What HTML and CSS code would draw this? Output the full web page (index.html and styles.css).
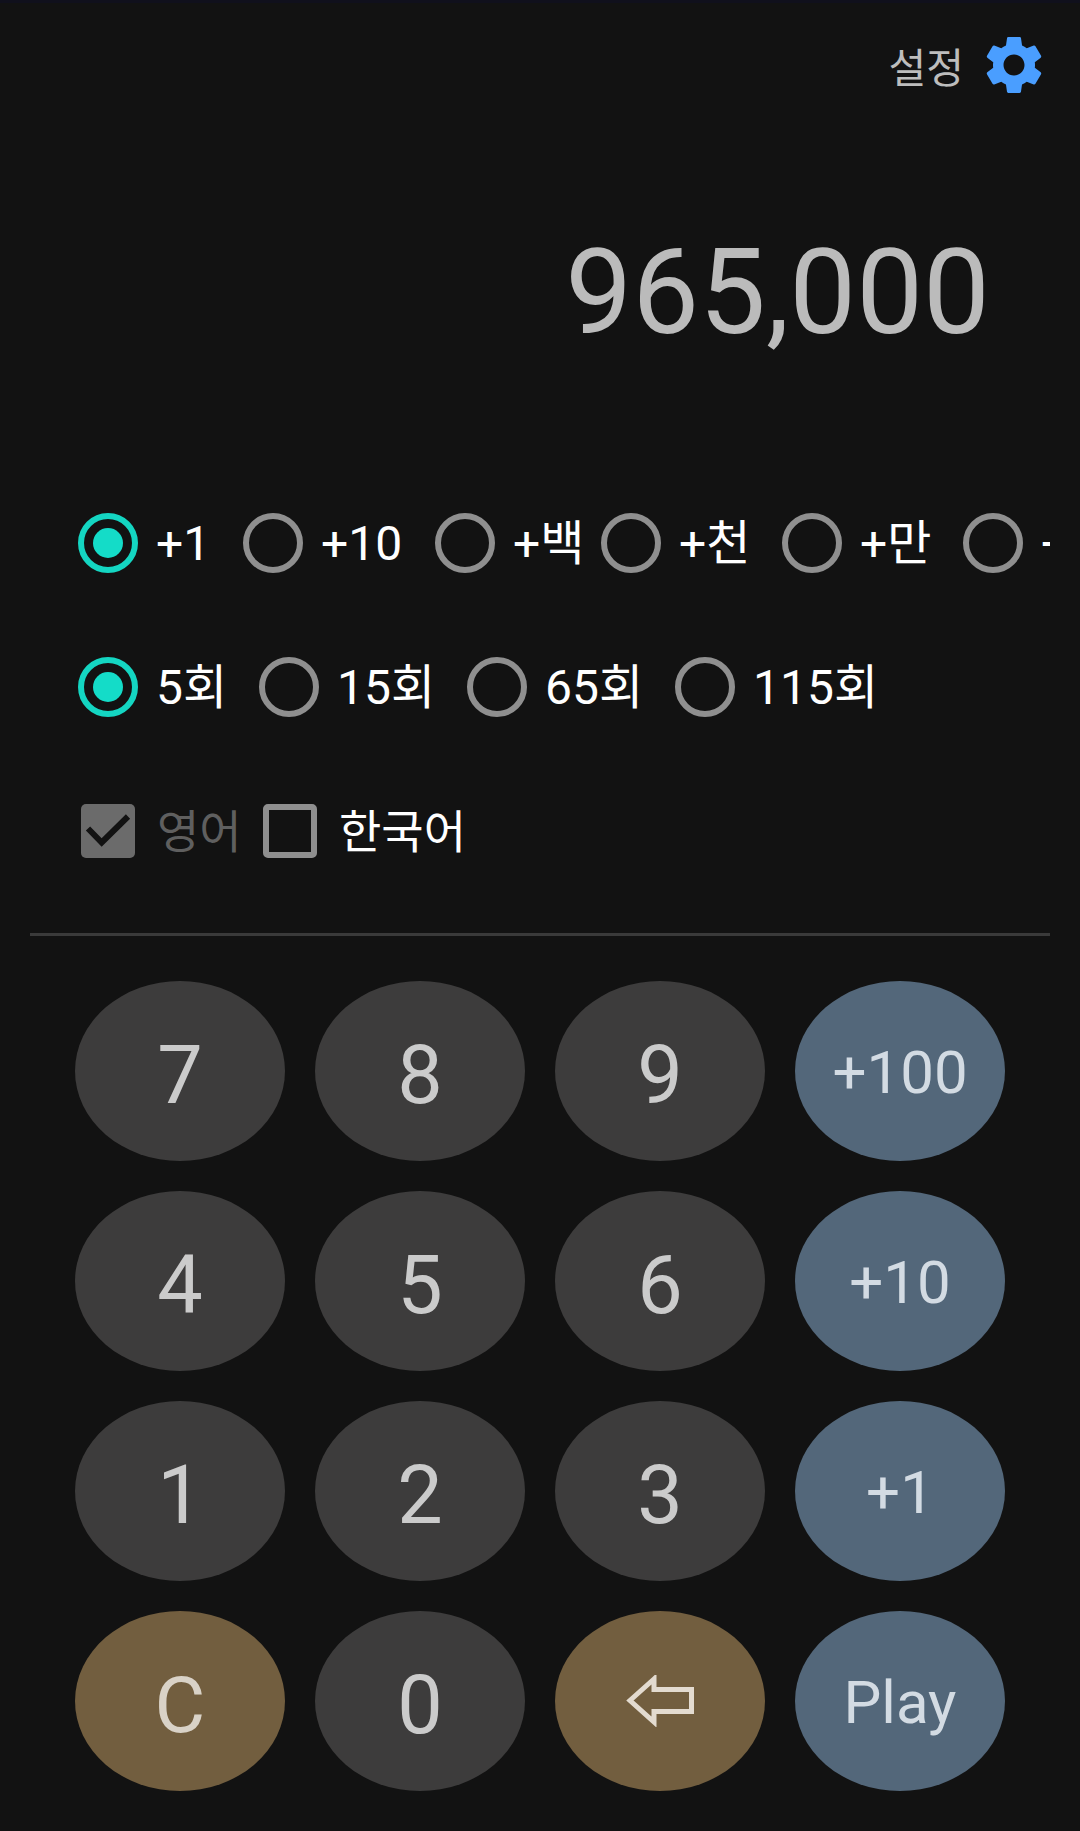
FILE: index.html
```html
<!DOCTYPE html>
<html lang="ko">
<head>
<meta charset="utf-8">
<title>설정</title>
<link rel="stylesheet" href="styles.css">
</head>
<body>
<div class="topstrip"></div>
<header class="header">
  <span class="settings-label">설정</span>
  <svg class="gear" viewBox="0 0 24 24"><path d="M19.14 12.94c.04-.3.06-.61.06-.94 0-.32-.02-.64-.07-.94l2.03-1.58c.18-.14.23-.41.12-.61l-1.92-3.32c-.12-.22-.37-.29-.59-.22l-2.39.96c-.5-.38-1.03-.7-1.62-.94l-.36-2.54c-.04-.24-.24-.41-.48-.41h-3.84c-.24 0-.43.17-.47.41l-.36 2.54c-.59.24-1.13.57-1.62.94l-2.39-.96c-.22-.08-.47 0-.59.22L2.74 8.87c-.12.21-.08.47.12.61l2.03 1.58c-.05.3-.09.63-.09.94s.02.64.07.94l-2.03 1.58c-.18.14-.23.41-.12.61l1.92 3.32c.12.22.37.29.59.22l2.39-.96c.5.38 1.03.7 1.62.94l.36 2.54c.05.24.24.41.48.41h3.84c.24 0 .44-.17.47-.41l.36-2.54c.59-.24 1.13-.56 1.62-.94l2.39.96c.22.08.47 0 .59-.22l1.92-3.32c.12-.22.07-.47-.12-.61l-2.01-1.58zM12 15.6c-1.98 0-3.6-1.62-3.6-3.6s1.62-3.6 3.6-3.6 3.6 1.62 3.6 3.6-1.62 3.6-3.6 3.6z"/></svg>
</header>
<div class="display">965,000</div>
<div class="options row-step">
  <div class="opt w-a"><span class="radio on"></span><span class="lbl">+1</span></div>
  <div class="opt w-b"><span class="radio"></span><span class="lbl">+10</span></div>
  <div class="opt w-c"><span class="radio"></span><span class="lbl">+백</span></div>
  <div class="opt w-d"><span class="radio"></span><span class="lbl">+천</span></div>
  <div class="opt w-d"><span class="radio"></span><span class="lbl">+만</span></div>
  <div class="opt"><span class="radio"></span><span class="lbl">+억</span></div>
</div>
<div class="options row-times">
  <div class="opt w-e"><span class="radio on"></span><span class="lbl">5회</span></div>
  <div class="opt w-f"><span class="radio"></span><span class="lbl">15회</span></div>
  <div class="opt w-f"><span class="radio"></span><span class="lbl">65회</span></div>
  <div class="opt"><span class="radio"></span><span class="lbl">115회</span></div>
</div>
<div class="options row-lang">
  <div class="opt w-g"><span class="check on"><svg viewBox="0 0 54 54"><path d="M7 24.5 L20.7 38.5 L47 12.5" /></svg></span><span class="lbl dim">영어</span></div>
  <div class="opt"><span class="check"></span><span class="lbl">한국어</span></div>
</div>
<hr class="divider">
<main class="keypad">
  <button class="key">7</button><button class="key">8</button><button class="key">9</button><button class="key blue small">+100</button>
  <button class="key">4</button><button class="key">5</button><button class="key">6</button><button class="key blue small">+10</button>
  <button class="key">1</button><button class="key">2</button><button class="key">3</button><button class="key blue small">+1</button>
  <button class="key brown">C</button><button class="key">0</button>
  <button class="key brown" aria-label="지우기"><svg class="back" viewBox="0 0 68 52"><path d="M28 4 L4 25.5 L28 47 V36.5 H65.5 V14.5 H28 Z"/></svg></button>
  <button class="key blue small">Play</button>
</main>
</body>
</html>
```
FILE: styles.css
```css
* { box-sizing: border-box; }
html, body { margin: 0; padding: 0; }
body {
  width: 1080px;
  height: 1831px;
  overflow: hidden;
  background: #121212;
  font-family: Roboto, "Noto Sans CJK KR", sans-serif;
  color: #fff;
}
.topstrip { height: 3px; background: #10101c; }
.header {
  height: 123px;
  padding: 0 31px 0 0;
  display: flex;
  justify-content: flex-end;
  align-items: center;
  gap: 15px;
}
.settings-label { font-size: 41px; color: #bdbdbd; }
.gear { width: 70px; height: 70px; fill: #4a9eff; display: block; }
.display {
  height: 166px;
  margin-top: 84px;
  padding-right: 90px;
  text-align: right;
  font-size: 119px;
  line-height: 166px;
  color: #bbbbbb;
}
.options {
  display: flex;
  align-items: center;
  height: 60px;
  width: 972px;
  margin-left: 78px;
  overflow: hidden;
}
.row-step { margin-top: 137px; }
.row-times { margin-top: 84px; }
.row-lang { margin-top: 84px; }
.opt { display: flex; align-items: center; flex: none; }
.w-a { width: 165px; }
.w-b { width: 192px; }
.w-c { width: 166px; }
.w-d { width: 181px; }
.w-e { width: 181px; }
.w-f { width: 208px; }
.w-g { width: 185px; padding-left: 3px; }
.radio {
  width: 60px;
  height: 60px;
  border-radius: 50%;
  border: 6px solid #8f8f8f;
  display: flex;
  align-items: center;
  justify-content: center;
  flex: none;
}
.radio.on { border-color: #14d6c2; }
.radio.on::after {
  content: "";
  width: 30px;
  height: 30px;
  border-radius: 50%;
  background: #14dcc8;
}
.lbl { font-size: 48px; margin-left: 18px; padding-top: 2px; white-space: nowrap; line-height: 60px; }
.check + .lbl { margin-left: 22px; font-size: 46px; }
.dim { color: #5f5f5f; }
.check {
  width: 54px;
  height: 54px;
  border: 6px solid #8f8f8f;
  border-radius: 5px;
  flex: none;
  display: block;
}
.check.on { background: #6b6b6b; border: 0; }
.check svg { display: block; width: 54px; height: 54px; fill: none; stroke: #121212; stroke-width: 6; }
.divider {
  margin: 72px 30px 0;
  border: 0;
  height: 3px;
  background: #3a3a3a;
}
.keypad {
  margin: 45px 0 0 75px;
  display: grid;
  grid-template-columns: repeat(4, 210px);
  grid-auto-rows: 180px;
  gap: 30px;
}
.key {
  border: 0;
  padding: 9px 0 0;
  border-radius: 50%;
  background: #3d3c3c;
  color: #cbcbcb;
  font-family: inherit;
  font-size: 81px;
  display: flex;
  align-items: center;
  justify-content: center;
}
.key.small { font-size: 60px; padding-top: 3px; }
.blue { background: #53677a; color: #d3dbe3; }
.brown { background: #725e3f; color: #d9d2c7; font-size: 78px; }
.back { width: 68px; height: 52px; margin-top: -9px; fill: none; stroke: #e3dbd0; stroke-width: 5; }
```
